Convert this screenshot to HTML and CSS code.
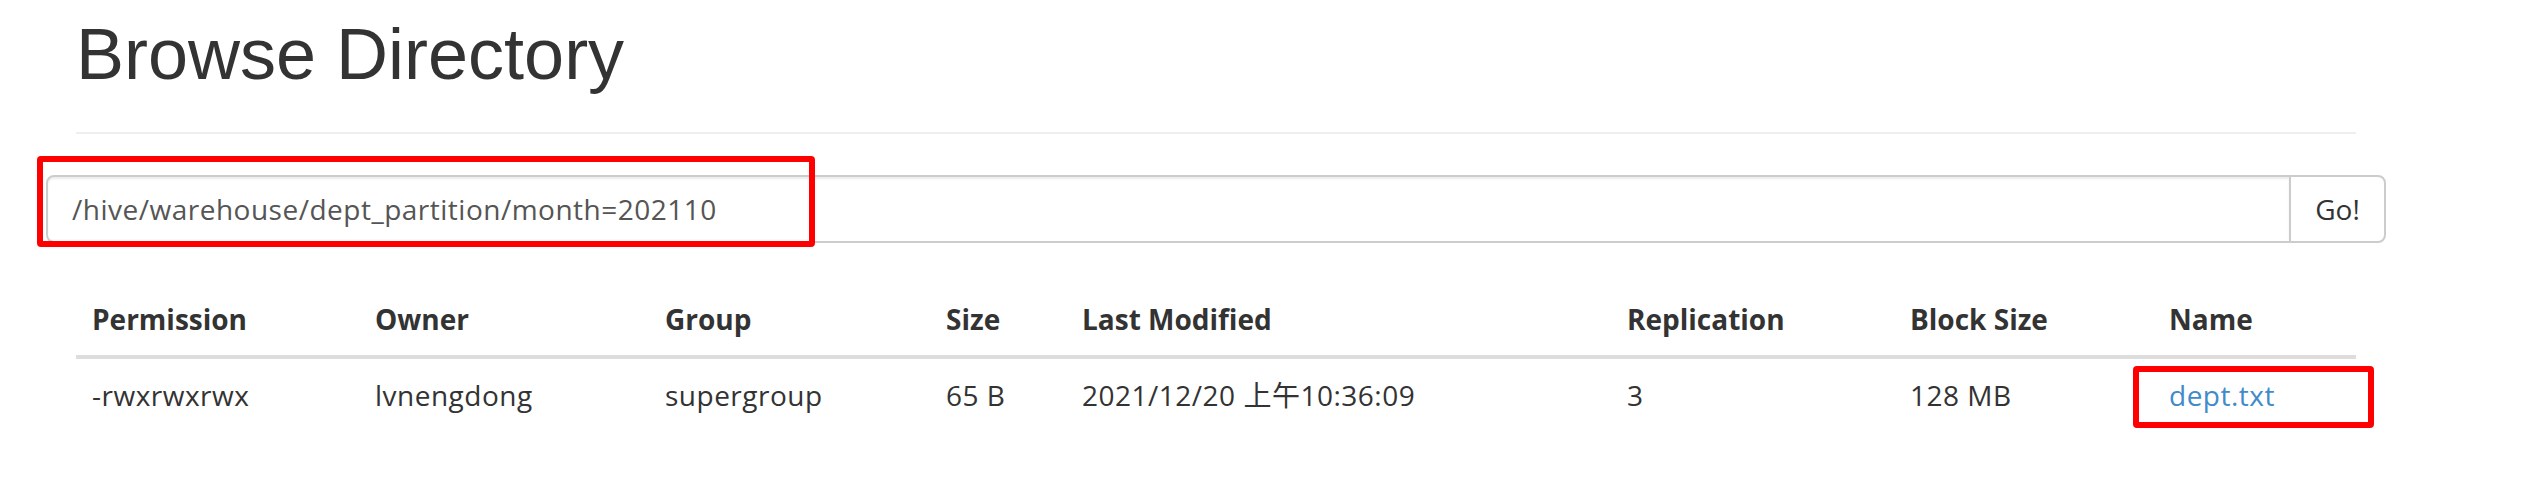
FILE: index.html
```html
<!DOCTYPE html>
<html lang="zh-CN">
<head>
<meta charset="utf-8">
<title>Browse Directory</title>
<link rel="stylesheet" href="styles.css">
</head>
<body>
<div class="container">
  <div class="page-header">
    <h1>Browse Directory</h1>
  </div>
  <div class="row">
    <form class="nav-form">
      <div class="input-group">
        <input type="text" class="form-control" value="/hive/warehouse/dept_partition/month=202110">
        <button class="btn" type="button">Go!</button>
        <span class="mark mark-path"></span>
      </div>
    </form>
  </div>
  <br>
  <table class="table">
    <colgroup>
      <col class="c-perm"><col class="c-owner"><col class="c-group"><col class="c-size"><col class="c-mod"><col class="c-rep"><col class="c-block"><col class="c-name">
    </colgroup>
    <thead>
      <tr>
        <th>Permission</th>
        <th>Owner</th>
        <th>Group</th>
        <th>Size</th>
        <th>Last Modified</th>
        <th>Replication</th>
        <th>Block Size</th>
        <th>Name</th>
      </tr>
    </thead>
    <tbody>
      <tr>
        <td>-rwxrwxrwx</td>
        <td>lvnengdong</td>
        <td>supergroup</td>
        <td>65 B</td>
        <td>2021/12/20 上午10:36:09</td>
        <td>3</td>
        <td>128 MB</td>
        <td class="name-cell"><a href="#">dept.txt</a><span class="mark mark-name"></span></td>
      </tr>
    </tbody>
  </table>
</div>
</body>
</html>
```
FILE: styles.css
```css
* { box-sizing: border-box; }
html, body { margin: 0; padding: 0; background: #fff; }
body {
  font-family: "Open Sans", "Noto Sans CJK SC", sans-serif;
  font-size: 28px;
  line-height: 40px;
  color: #333;
}
.container {
  width: 2340px;
  margin-left: 46px;
  padding: 15px 30px 0;
}
.page-header {
  padding-bottom: 18px;
  margin: 0 0 41px;
  border-bottom: 2px solid #eee;
}
.page-header h1 {
  margin: 0 0 20px;
  font-family: "Liberation Sans", Arial, sans-serif;
  font-size: 72px;
  font-weight: 400;
  line-height: 79.2px;
  color: #333;
}
.row { margin: 0 -30px; }
.nav-form { margin: 0; }
.input-group {
  position: relative;
  display: flex;
  height: 68px;
}
.form-control {
  flex: 1;
  height: 68px;
  padding: 12px 24px;
  font-family: "Open Sans", "Noto Sans CJK SC", sans-serif;
  font-size: 28px;
  letter-spacing: 0.5px;
  line-height: 40px;
  color: #555;
  background: #fff;
  border: 2px solid #ccc;
  border-radius: 8px 0 0 8px;
  box-shadow: inset 0 2px 2px rgba(0,0,0,.075);
  outline: none;
}
.btn {
  width: 97px;
  height: 68px;
  margin-left: -2px;
  padding: 12px 0;
  font-family: "Open Sans", "Noto Sans CJK SC", sans-serif;
  font-size: 28px;
  line-height: 40px;
  color: #333;
  background: #fff;
  border: 2px solid #ccc;
  border-radius: 0 8px 8px 0;
  text-align: center;
}
.mark {
  position: absolute;
  border: 6px solid #ff0000;
  border-radius: 4px;
  pointer-events: none;
}
.mark-path {
  left: -9px;
  top: -19px;
  width: 778px;
  height: 91px;
}
.table {
  width: 2280px;
  table-layout: fixed;
  border-collapse: collapse;
  border-spacing: 0;
  margin-bottom: 40px;
}
.c-perm { width: 283px; }
.c-owner { width: 290px; }
.c-group { width: 281px; }
.c-size { width: 136px; }
.c-mod { width: 545px; }
.c-rep { width: 283px; }
.c-block { width: 259px; }
.c-name { width: 203px; }
.table th {
  padding: 16px;
  text-align: left;
  vertical-align: bottom;
  font-weight: 700;
  line-height: 40px;
  border-bottom: 4px solid #ddd;
  white-space: nowrap;
}
.table td {
  padding: 16px;
  line-height: 40px;
  letter-spacing: 0.5px;
  vertical-align: top;
  white-space: nowrap;
}
.name-cell { position: relative; }
.name-cell a { color: #428bca; text-decoration: none; }
.mark-name {
  left: -20px;
  top: 7px;
  width: 241px;
  height: 62px;
}
```
